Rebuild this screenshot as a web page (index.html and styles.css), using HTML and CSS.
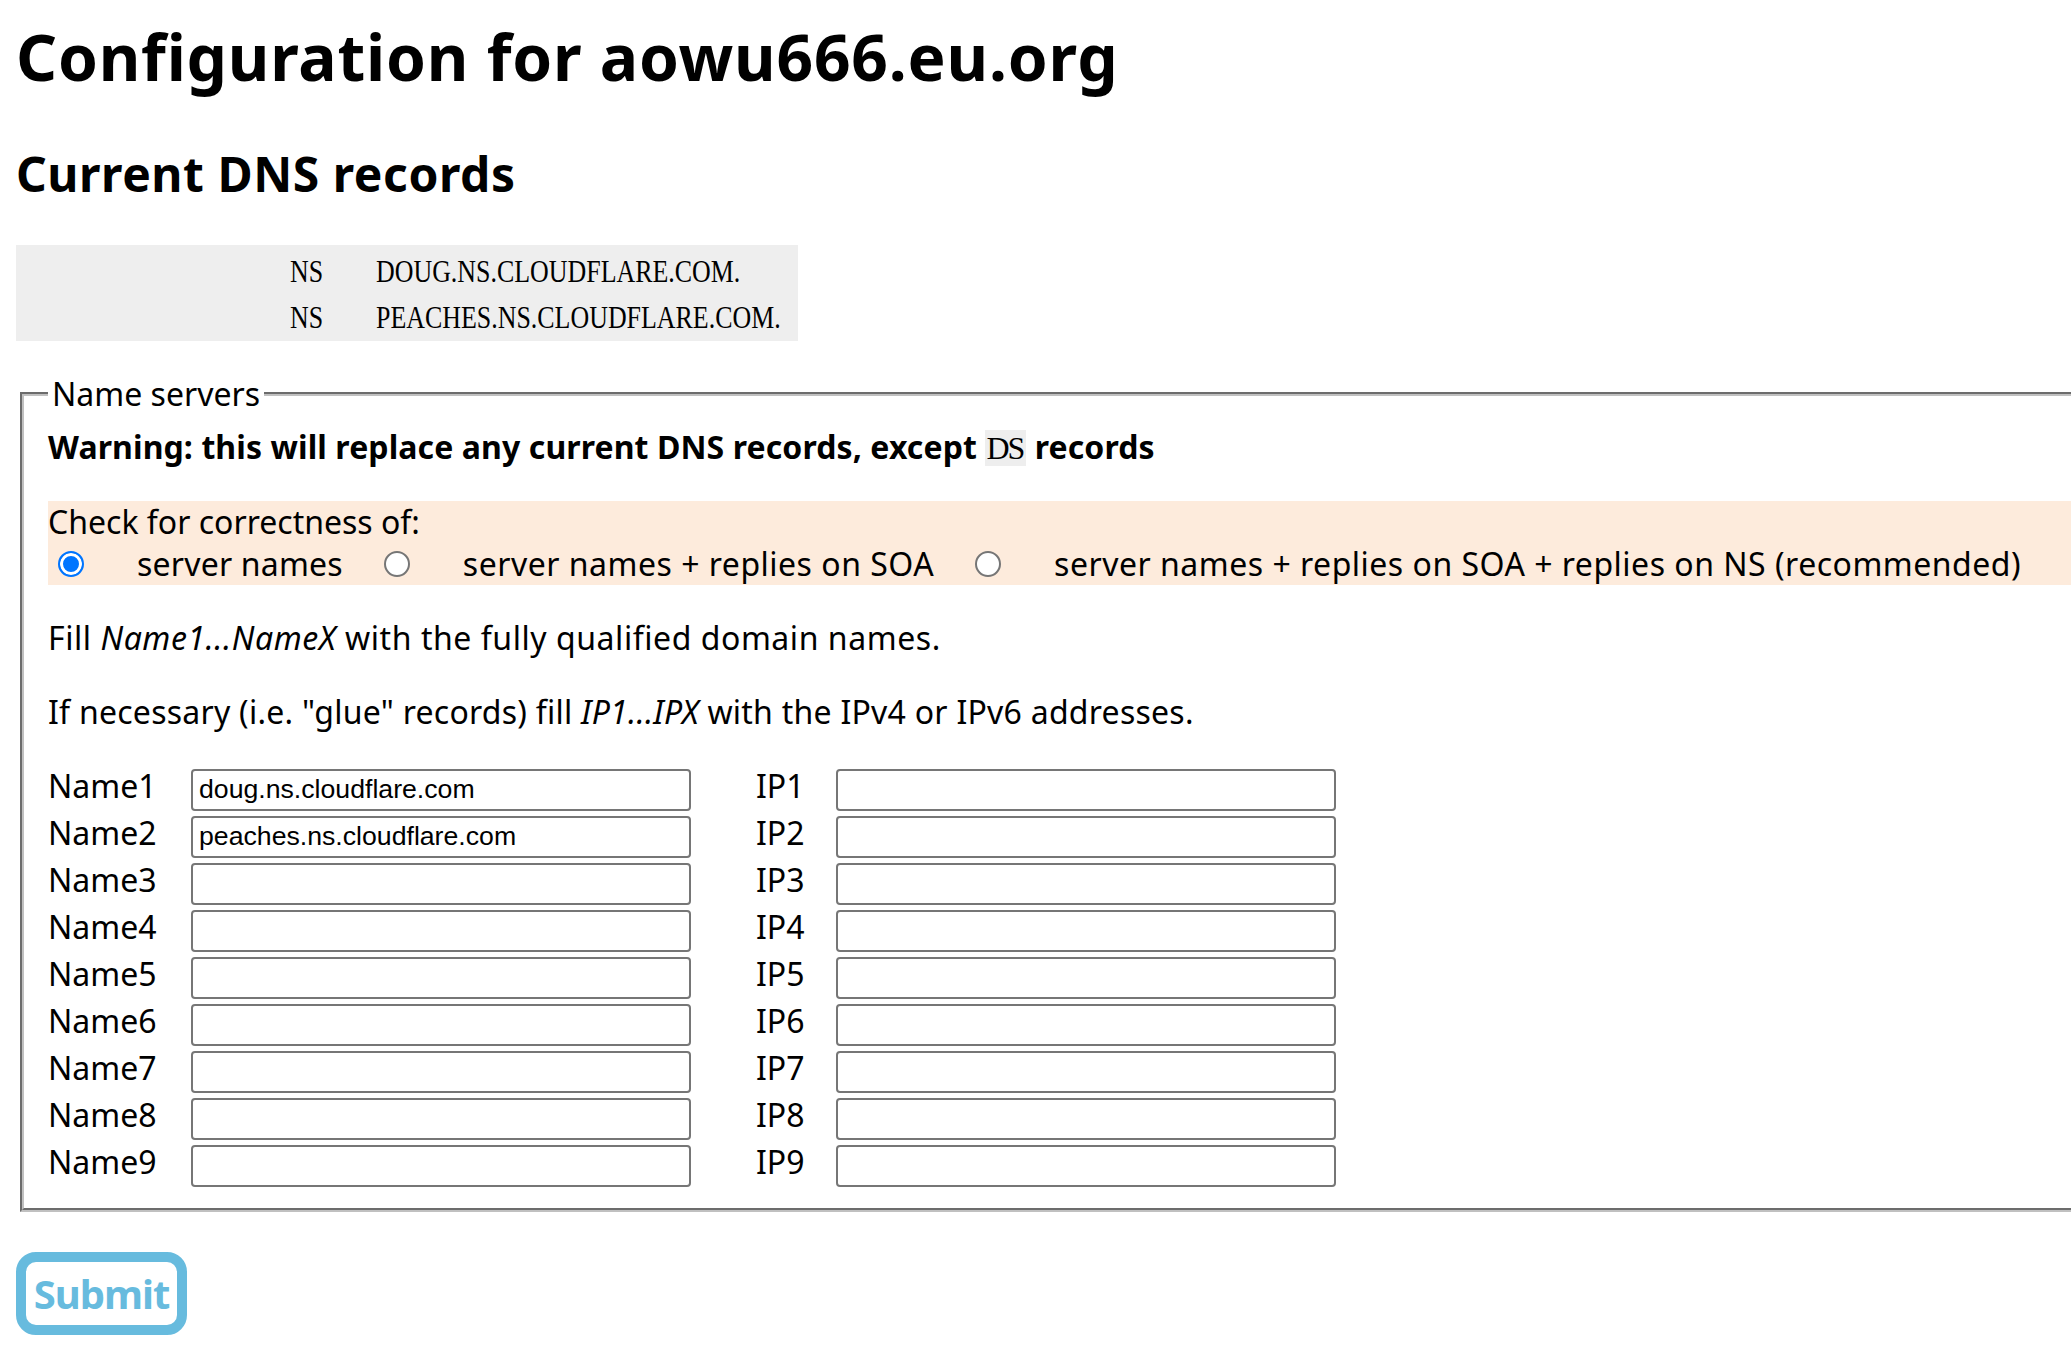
FILE: index.html
```html
<!DOCTYPE html>
<html lang="en">
<head>
<meta charset="utf-8">
<title>Configuration for aowu666.eu.org</title>
<link rel="stylesheet" href="styles.css">
</head>
<body>
<h1 class="title">Configuration for aowu666.eu.org</h1>
<h2 class="subtitle">Current DNS records</h2>
<div class="records">
  <div class="rec"><span class="rtype"><span class="mono">NS</span></span><span class="rval"><span class="mono">DOUG.NS.CLOUDFLARE.COM.</span></span></div>
  <div class="rec"><span class="rtype"><span class="mono">NS</span></span><span class="rval"><span class="mono">PEACHES.NS.CLOUDFLARE.COM.</span></span></div>
</div>
<form class="nsform">
  <fieldset class="fs">
    <legend class="fs-legend">Name servers</legend>
    <div class="warn">Warning: this will replace any current DNS records, except <code class="code">DS</code> records</div>
    <div class="check">
      <div class="check-title">Check for correctness of:</div>
      <div class="check-opts">
        <input class="radio" type="radio" name="check" id="c1" checked>
        <label class="opt opt-short" for="c1">server names</label>
        <input class="radio" type="radio" name="check" id="c2">
        <label class="opt" for="c2">server names + replies on SOA</label>
        <input class="radio" type="radio" name="check" id="c3">
        <label class="opt" for="c3">server names + replies on SOA + replies on NS (recommended)</label>
      </div>
    </div>
    <p class="para para-wide">Fill <i>Name1...NameX</i> with the fully qualified domain names.</p>
    <p class="para para-tight">If necessary (i.e. "glue" records) fill <i>IP1...IPX</i> with the IPv4 or IPv6 addresses.</p>
    <div class="ns-grid">
      <label class="nlabel">Name1</label><input class="field" type="text" value="doug.ns.cloudflare.com"><label class="iplabel">IP1</label><input class="field" type="text">
      <label class="nlabel">Name2</label><input class="field" type="text" value="peaches.ns.cloudflare.com"><label class="iplabel">IP2</label><input class="field" type="text">
      <label class="nlabel">Name3</label><input class="field" type="text"><label class="iplabel">IP3</label><input class="field" type="text">
      <label class="nlabel">Name4</label><input class="field" type="text"><label class="iplabel">IP4</label><input class="field" type="text">
      <label class="nlabel">Name5</label><input class="field" type="text"><label class="iplabel">IP5</label><input class="field" type="text">
      <label class="nlabel">Name6</label><input class="field" type="text"><label class="iplabel">IP6</label><input class="field" type="text">
      <label class="nlabel">Name7</label><input class="field" type="text"><label class="iplabel">IP7</label><input class="field" type="text">
      <label class="nlabel">Name8</label><input class="field" type="text"><label class="iplabel">IP8</label><input class="field" type="text">
      <label class="nlabel">Name9</label><input class="field" type="text"><label class="iplabel">IP9</label><input class="field" type="text">
    </div>
  </fieldset>
  <button class="submit" type="submit">Submit</button>
</form>
</body>
</html>
```
FILE: styles.css
```css
html {
  overflow: hidden;
}
body {
  margin: 0;
  padding: 16px 0 0 16px;
  font-family: "Noto Sans", "Noto Sans CJK SC", sans-serif;
  font-size: 32px;
  line-height: 42px;
  color: #000;
  background: #fff;
}
.title {
  margin: 0 0 44px 0;
  font-size: 64px;
  line-height: 82px;
  font-weight: bold;
  letter-spacing: 0.8px;
  white-space: nowrap;
}
.subtitle {
  margin: 0 0 40px 0;
  font-size: 48px;
  line-height: 63px;
  font-weight: bold;
  letter-spacing: 0.55px;
}
.records {
  width: 782px;
  box-sizing: border-box;
  padding: 2px 0 2px 274px;
  background: #eeeeee;
  margin-bottom: 32px;
}
.rec {
  display: flex;
  height: 46px;
  line-height: 46px;
}
.rtype {
  width: 86px;
  flex: none;
}
.mono {
  display: inline-block;
  font-family: "Liberation Serif", "Noto Sans CJK SC", serif;
  font-size: 32px;
  transform: scaleX(0.81);
  transform-origin: 0 50%;
  white-space: nowrap;
}
.nsform {
  margin: 0;
}
.fs {
  margin: 0 -120px 0 4px;
  padding: 11px 24px 20px 24px;
  border: 4px groove #c0c0c0;
  min-width: 0;
}
.fs-legend {
  padding: 0 4px;
  line-height: 42px;
}
.warn {
  font-weight: bold;
  margin-bottom: 32px;
  letter-spacing: 0.1px;
  white-space: nowrap;
}
.code {
  font-family: "Liberation Serif", serif;
  font-weight: normal;
  font-size: 32px;
  letter-spacing: -2px;
  background: #eeeeee;
  padding: 0 3px 0 1px;
}
.check {
  background: #fdebdc;
}
.check-opts {
  display: flex;
  align-items: center;
  height: 42px;
  white-space: nowrap;
}
.radio {
  appearance: none;
  -webkit-appearance: none;
  box-sizing: border-box;
  width: 26px;
  height: 26px;
  margin: 0 6px 0 10px;
  border: 2px solid #767676;
  border-radius: 50%;
  background: #fff;
  flex: none;
}
.radio:checked {
  border-color: #0075ff;
  background: #0075ff;
  box-shadow: inset 0 0 0 3px #fff;
}
.opt {
  margin: 0 31px 0 47px;
  letter-spacing: 0.5px;
}
.opt-short {
  letter-spacing: 0.2px;
}
.para {
  margin: 32px 0;
  letter-spacing: 0.4px;
  white-space: nowrap;
}
.para-wide {
  letter-spacing: 0.55px;
}
.para-tight {
  letter-spacing: 0.25px;
}
.ns-grid {
  display: grid;
  grid-template-columns: 143px 500px 145px 500px;
  grid-auto-rows: 47px;
  align-items: baseline;
  margin-top: 32px;
}
.nlabel, .iplabel {
  line-height: 42px;
}
.iplabel {
  padding-left: 65px;
}
.field {
  box-sizing: border-box;
  width: 500px;
  height: 42px;
  margin: 0;
  padding: 0 4px 0 6px;
  border: 2px solid #767676;
  border-radius: 4px;
  font-family: "Liberation Sans", Arial, sans-serif;
  font-size: 26.67px;
  color: #000;
  background: #fff;
}
.submit {
  display: block;
  box-sizing: border-box;
  width: 171px;
  height: 83px;
  margin: 40px 0 0 0;
  padding: 0;
  border: 10px solid #67bbde;
  border-radius: 20px;
  background: #fff;
  color: #67bbde;
  font-family: "Noto Sans", sans-serif;
  font-size: 40px;
  font-weight: bold;
  line-height: 56px;
  letter-spacing: -1px;
}
```
